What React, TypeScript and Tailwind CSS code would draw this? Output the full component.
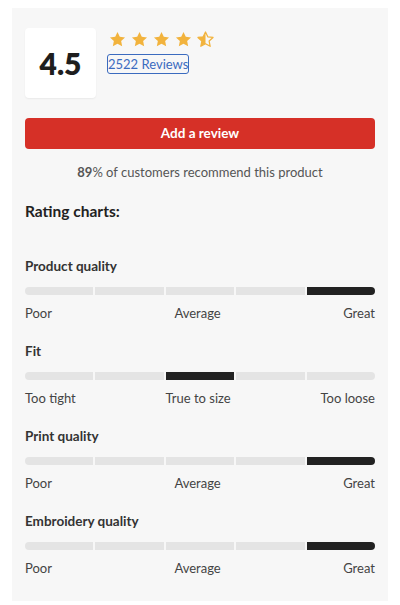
import { Fragment } from 'react';

const charts = [
  { title: 'Product quality', active: 4, labels: ['Poor', 'Average', 'Great'] },
  { title: 'Fit', active: 2, labels: ['Too tight', 'True to size', 'Too loose'] },
  { title: 'Print quality', active: 4, labels: ['Poor', 'Average', 'Great'] },
  { title: 'Embroidery quality', active: 4, labels: ['Poor', 'Average', 'Great'] },
];

function Star({ half }: { half?: boolean }) {
  const d = 'M12 2.5l2.9 6.1 6.6.8-4.9 4.6 1.3 6.6L12 17.3l-5.9 3.3 1.3-6.6-4.9-4.6 6.6-.8z';
  return (
    <svg viewBox="0 0 24 24" className="w-[19px] h-[19px]">
      {half ? (
        <>
          <defs>
            <clipPath id="halfclip">
              <rect x="0" y="0" width="12" height="24" />
            </clipPath>
          </defs>
          <path d={d} fill="none" stroke="#f2b33d" strokeWidth="1.6" strokeLinejoin="round" />
          <path d={d} fill="#f2b33d" clipPath="url(#halfclip)" />
        </>
      ) : (
        <path d={d} fill="#f2b33d" />
      )}
    </svg>
  );
}

function Chart({ title, active, labels }: { title: string; active: number; labels: string[] }) {
  return (
    <div className="flex flex-col">
      <h3 className="text-[13.5px] font-bold text-[#333] leading-[18px]">{title}</h3>
      <div className="flex gap-[2px] mt-[12px] h-[8px] rounded-full overflow-hidden">
        {[0, 1, 2, 3, 4].map((i) => (
          <div key={i} className={`flex-1 ${i === active ? 'bg-[#222222]' : 'bg-[#e4e4e4]'}`} />
        ))}
      </div>
      <div className="flex justify-between mt-[9px] text-[13px] text-[#444] leading-[18px]">
        {labels.map((l) => (
          <Fragment key={l}>
            <span>{l}</span>
          </Fragment>
        ))}
      </div>
    </div>
  );
}

export default function App() {
  return (
    <div className="bg-white min-h-[605px] pt-[8px] px-[12px]" style={{ fontFamily: 'Lato, "Open Sans", sans-serif' }}>
      <div className="bg-[#f7f7f7] px-[13px] pt-[20px] pb-[24px]">
        <div className="flex gap-[13px]">
          <div className="w-[71px] h-[70px] bg-white rounded-[4px] shadow-[0_1px_2px_rgba(0,0,0,0.06)] flex items-center justify-center">
            <span className="text-[30px] font-extrabold text-[#1e1e1e]">4.5</span>
          </div>
          <div className="flex flex-col items-start pt-[2px]">
            <div className="flex gap-[3px] ml-[-1px]">
              <Star />
              <Star />
              <Star />
              <Star />
              <Star half />
            </div>
            <a className="mt-[5px] text-[13px] leading-[18px] text-[#3b6bbf] border-[1.5px] border-[#3b6bbf] rounded-[3px] ml-[-2px]">
              2522 Reviews
            </a>
          </div>
        </div>

        <button className="mt-[20px] w-full h-[31px] bg-[#d63027] rounded-[4px] text-white text-[13.5px] font-bold">
          Add a review
        </button>

        <p className="mt-[14px] text-center text-[13px] text-[#555]">
          <span className="font-bold">89</span>% of customers recommend this product
        </p>

        <h2 className="mt-[17px] text-[15.5px] font-bold text-[#222]">Rating charts:</h2>

        <div className="mt-[34px] flex flex-col gap-[20px]">
          {charts.map((c) => (
            <Chart key={c.title} {...c} />
          ))}
        </div>
      </div>
    </div>
  );
}
